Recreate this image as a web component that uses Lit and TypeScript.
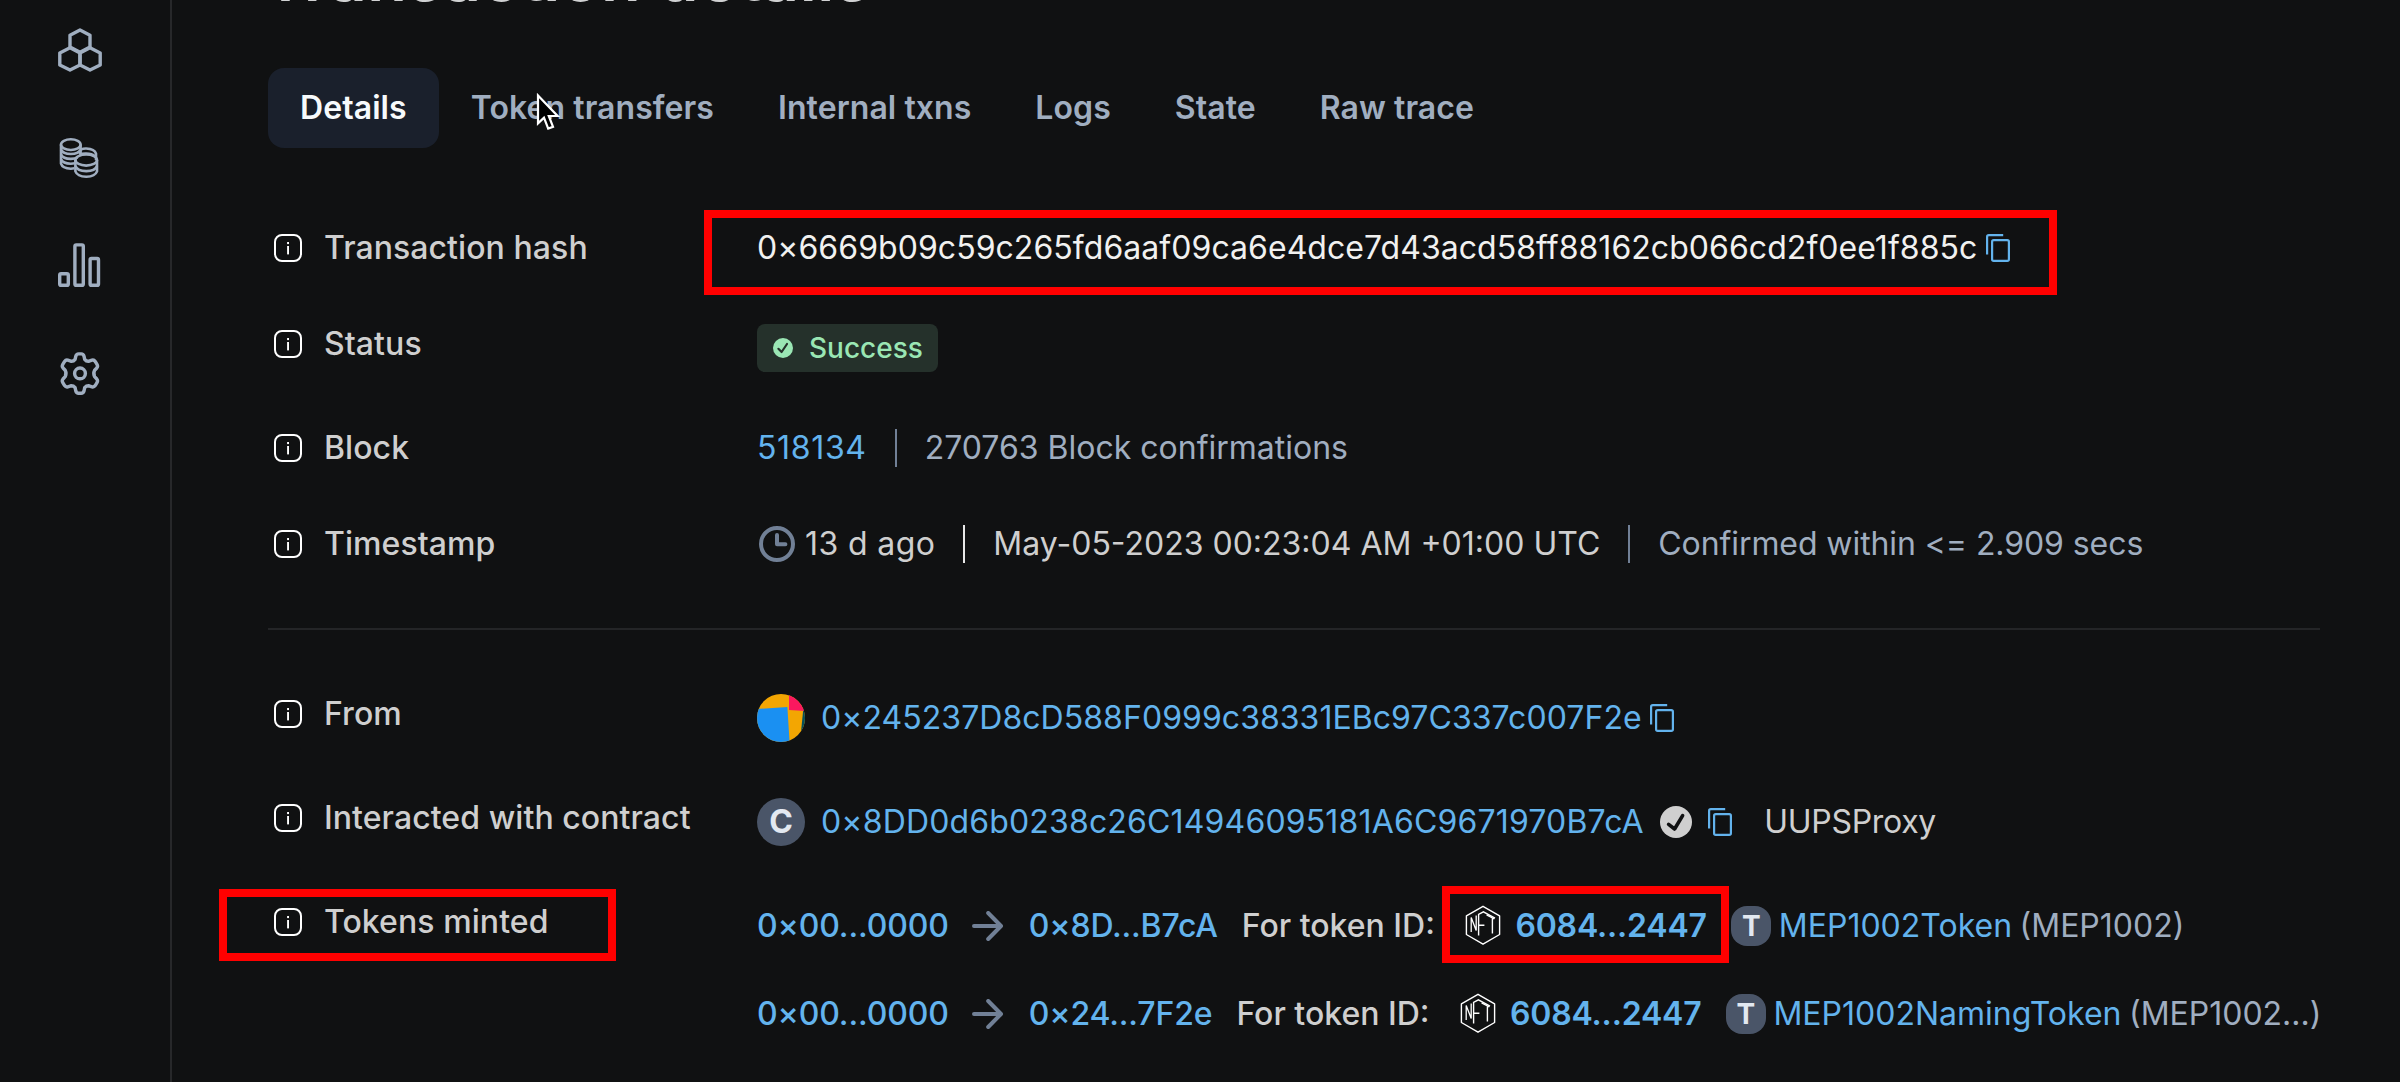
import { LitElement, html, css } from "lit";
import { customElement } from "lit/decorators.js";

const tabs = ["Details", "Token transfers", "Internal txns", "Logs", "State", "Raw trace"];

const infoIcon = html`<svg class="info" viewBox="0 0 28 28" width="28" height="28" fill="none">
  <rect x="1" y="1" width="26" height="26" rx="7" stroke="#fff" stroke-width="2" />
  <rect x="13.1" y="8" width="1.9" height="2.1" fill="#fff" />
  <rect x="13.1" y="12" width="1.9" height="8.4" fill="#fff" />
</svg>`;

const copyIcon = html`<svg class="copy" viewBox="0 0 24 28" width="24" height="28" fill="none">
  <path d="M17.2 1.1H2.8Q1.1 1.1 1.1 2.8V20.4" stroke="#63b3ed" stroke-width="2.2" />
  <rect x="6.1" y="6.1" width="16.8" height="20.8" rx="1.6" stroke="#63b3ed" stroke-width="2.2" />
</svg>`;

const arrowIcon = html`<svg class="arrow" viewBox="0 0 32 30" width="32" height="30" fill="none">
  <path d="M2 15H28M16.2 2L29 15L16.2 28" stroke="#718096" stroke-width="4" stroke-linecap="round" stroke-linejoin="round" />
</svg>`;

const nftIcon = html`<svg class="nft" viewBox="0 0 36 42" width="36" height="42" fill="none" stroke="#fff">
  <path d="M18 1.3L34.6 10.9V29.5L18 39.2L1.4 29.5V10.9Z" stroke-width="1.4" stroke-linejoin="round" />
  <path d="M6.2 27V12.4L11.2 25.4V10.4" stroke-width="1.3" />
  <path d="M13.6 30.6V9.4L18.4 6.8L30 13.2M13.6 20.2H19.4" stroke-width="1.4" />
  <path d="M21.6 9.8L29.4 14M27.4 12.6V28.4" stroke-width="1.4" />
</svg>`;

@customElement("app-root")
export class AppRoot extends LitElement {
  static styles = css`
    :host {
      display: block;
      width: 2400px;
      height: 1082px;
      overflow: hidden;
      position: relative;
      background: #101112;
      font-family: Inter, "Liberation Sans", sans-serif;
      font-size: 32px;
      line-height: 48px;
      color: #cfcfcf;
    }
    svg { display: block; flex: none; }
    .page { display: flex; height: 1082px; }
    .sidebar {
      box-sizing: border-box;
      width: 172px;
      flex: none;
      border-right: 2px solid #27282a;
      display: flex;
      flex-direction: column;
      align-items: center;
      gap: 48px;
      padding: 20px 10px 0 0;
    }
    .nav { width: 60px; height: 60px; }
    .main { padding-left: 96px; width: 2052px; flex: none; }
    .title {
      margin: 0;
      display: flow-root;
      height: 68px;
      font-size: 65px;
      font-weight: 600;
      letter-spacing: 0.5px;
      line-height: 80px;
      color: #d0d1d2;
    }
    .title span { display: block; margin: -62px 0 0 -4px; }
    .tabs { display: flex; height: 80px; font-weight: 600; color: #a0aec0; letter-spacing: 0.07px; }
    .tab { padding: 16px 32px; border-radius: 16px; white-space: nowrap; }
    .tab.active { background: #1a202c; color: #f7fafc; }
    .row { display: flex; align-items: flex-start; white-space: nowrap; }
    .label {
      display: flex;
      align-items: center;
      flex: none;
      width: 489px;
      padding-left: 6px;
      box-sizing: border-box;
      gap: 22px;
      font-weight: 500;
      letter-spacing: 0.07px;
    }
    .value { display: flex; align-items: center; height: 48px; flex: none; }
    .value > span { flex: none; }
    .hash-row { margin-top: 76px; }
    .status-row { margin-top: 48px; }
    .status-row .value { margin-top: 4px; }
    .block-row { margin-top: 52px; }
    .time-row { margin-top: 48px; }
    .divider { height: 2px; background: #242527; margin: 60px 0; width: 2052px; }
    .low > .value, .transfers { margin-top: 4px; }
    .low { margin-bottom: 52px; }
    .bright { color: #f1f1f0; }
    .blue { color: #63b3ed; }
    .gray { color: #a0aec0; }
    .mid { font-weight: 500; }
    .addr { letter-spacing: -0.15px; }
    .hash { letter-spacing: 0.05px; }
    .contract { letter-spacing: 0.16px; }
    .block { letter-spacing: 0.65px; }
    .ago { letter-spacing: 0.4px; }
    .confirmed { letter-spacing: -0.08px; }
    .copy { margin-left: 8.5px; }
    .badge {
      display: flex;
      align-items: center;
      box-sizing: border-box;
      height: 48px;
      width: 181px;
      padding-left: 16px;
      gap: 16px;
      border-radius: 8px;
      background: #25312b;
      color: #9ae6b4;
      font-size: 28px;
      font-weight: 500;
    }
    .sep { width: 2px; height: 38px; background: #718096; margin: 0 28px; }
    .sep.light { background: #e8e8e8; }
    .clock { margin: 0 10px 0 2px; }
    .avatar { margin-right: 16px; }
    .circle {
      width: 48px; height: 48px; border-radius: 50%;
      background: #4a5568; color: #e2e8f0; font-weight: 700;
      text-align: center; margin-right: 16px;
    }
    .token {
      width: 40px; height: 40px; border-radius: 16px; line-height: 40px;
      background: #4a5568; color: #e2e8f0; font-weight: 700; font-size: 28px;
      text-align: center; margin-right: 7.5px;
    }
    .verified { margin: 0 7.5px 0 16.5px; }
    .proxy { margin-left: 32px; letter-spacing: -0.3px; }
    .arrow { margin: 0 25px 0 23px; }
    .for { margin-left: 24px; }
    .nft { margin: 0 14.5px 0 30px; }
    .id { font-weight: 600; letter-spacing: -0.18px; margin-right: 24.5px; }
    .sym { margin-left: 7.5px; }
    .transfers { display: flex; flex-direction: column; gap: 40px; flex: none; }
    .mark { position: absolute; box-sizing: border-box; border: 8px solid #ff0000; }
    .mark-hash { left: 704px; top: 209.5px; width: 1353px; height: 85px; }
    .mark-minted { left: 219px; top: 889px; width: 397px; height: 72px; }
    .mark-id { left: 1442px; top: 886px; width: 287px; height: 77px; }
    .cursor { position: absolute; left: 535px; top: 92px; }
  `;

  private row(cls: string, label: string, value: unknown) {
    return html`<div class="row ${cls}">
      <div class="label">${infoIcon}<span>${label}</span></div>
      ${value}
    </div>`;
  }

  private transfer(to: string, name: string, symbol: string) {
    return html`<div class="value">
      <span class="blue mid addr">0×00...0000</span>${arrowIcon}<span class="blue mid addr">${to}</span>
      <span class="for mid">For token ID:</span>${nftIcon}
      <span class="blue id">6084...2447</span><span class="token">T</span>
      <span class="blue">${name}</span><span class="gray sym">(${symbol})</span>
    </div>`;
  }

  render() {
    return html`
      <div class="page">
        <nav class="sidebar">
          <svg class="nav" viewBox="50 20 60 60" fill="none" stroke="#a0aec0" stroke-width="3.4" stroke-linejoin="round">
            <path d="M80 30L90 35.2V47L80 52.2L70 47V35.2Z" />
            <path d="M70 47.8L80 53V65L70 70L59.8 65V53Z" />
            <path d="M90 47.8L100.2 53V65L90 70L80 65V53Z" />
          </svg>
          <svg class="nav" viewBox="50 128 60 60" fill="none" stroke="#a0aec0" stroke-width="2.6">
            <ellipse cx="70.8" cy="144.6" rx="9.8" ry="5.4" />
            <path d="M61 144.6V163.6Q62.5 168.4 70.8 168.7L74.4 168.3" />
            <path d="M80.6 144.6V154M61 149.6Q63 154 70.8 154T80.6 149.6" />
            <path d="M61 154.6Q63 158.8 70.8 158.9Q75 158.8 77.6 157.4M61 159.4Q63 163.6 70.8 163.7L75 163.2" />
            <path d="M80.6 149.6Q83.4 148.4 86.2 148.5Q94.6 149 96 153.6V160" />
            <path d="M79.2 154.6Q82 153.4 86.2 153.5Q92 153.6 95 156.4" />
            <ellipse cx="86.2" cy="160" rx="10.8" ry="5.6" />
            <path d="M75.4 160V171.4Q77.4 176.6 86.2 176.7T97 171.4V160" />
            <path d="M75.4 166Q77.4 171 86.2 171.1T97 166" />
          </svg>
          <svg class="nav" viewBox="50 236 60 60" fill="none" stroke="#a0aec0" stroke-width="3.4">
            <rect x="59.7" y="273.7" width="8.6" height="11.6" rx="1.4" />
            <rect x="74.9" y="244.9" width="8.4" height="40.4" rx="1.4" />
            <rect x="90.1" y="258.5" width="8.4" height="26.8" rx="1.4" />
          </svg>
          <svg class="nav" viewBox="50 344 60 60" fill="none" stroke="#a0aec0" stroke-width="3.4" stroke-linejoin="round">
            <circle cx="80" cy="373.4" r="5.4" />
            <path d="M75.8 356.2Q76.4 353.9 78.6 353.9H81.2Q83.4 353.9 84 356.2L84.7 359.4Q86.4 361.6 89 361.2L92 360.2Q94 359.7 95.2 361.4L97 364.4Q98.2 366.4 96.8 368L94.6 370.3Q93 373.6 94.6 376.6L96.8 379Q98.2 380.6 97 382.6L95.2 385.6Q94 387.3 92 386.8L89 385.8Q86.4 385.6 84.7 387.6L84 391Q83.4 393.2 81.2 393.2H78.6Q76.4 393.2 75.8 391L75.1 387.6Q73.4 385.6 70.8 385.8L67.8 386.8Q65.8 387.3 64.6 385.6L62.8 382.6Q61.6 380.6 63 379L65.2 376.6Q66.8 373.6 65.2 370.3L63 368Q61.6 366.4 62.8 364.4L64.6 361.4Q65.8 359.7 67.8 360.2L70.8 361.2Q73.4 361.6 75.1 359.4Z" />
          </svg>
        </nav>
        <main class="main">
          <h1 class="title"><span>Transaction details</span></h1>
          <div class="tabs">
            ${tabs.map((t, i) => html`<div class="tab ${i === 0 ? "active" : ""}">${t}</div>`)}
          </div>
          ${this.row("hash-row", "Transaction hash", html`<div class="value">
            <span class="bright hash">0×6669b09c59c265fd6aaf09ca6e4dce7d43acd58ff88162cb066cd2f0ee1f885c</span>${copyIcon}
          </div>`)}
          ${this.row("status-row", "Status", html`<div class="value">
            <div class="badge">
              <svg viewBox="0 0 20 20" width="20" height="20"><circle cx="10" cy="10" r="10" fill="#9ae6b4" />
                <path d="M5.4 10.8L8.6 14L14 6" fill="none" stroke="#25312b" stroke-width="2.2" stroke-linecap="round" stroke-linejoin="round" /></svg>
              <span>Success</span>
            </div>
          </div>`)}
          ${this.row("block-row", "Block", html`<div class="value">
            <span class="blue block">518134</span><span class="sep"></span><span class="gray">270763 Block confirmations</span>
          </div>`)}
          ${this.row("time-row", "Timestamp", html`<div class="value">
            <svg class="clock" viewBox="0 0 36 36" width="36" height="36" fill="none" stroke="#718096">
              <circle cx="18" cy="18" r="16" stroke-width="4" />
              <path d="M18 9V18.2H26.4" stroke-width="4" stroke-linecap="round" stroke-linejoin="round" /></svg>
            <span class="ago">13 d ago</span><span class="sep light"></span><span>May-05-2023 00:23:04 AM +01:00 UTC</span><span class="sep"></span><span class="gray confirmed">Confirmed within &lt;= 2.909 secs</span>
          </div>`)}
          <div class="divider"></div>
          ${this.row("low", "From", html`<div class="value">
            <svg class="avatar" viewBox="0 0 48 48" width="48" height="48">
              <defs><clipPath id="round"><circle cx="24" cy="24" r="24" /></clipPath></defs>
              <g clip-path="url(#round)">
                <rect width="48" height="48" fill="#f3a602" />
                <path d="M46.4 14L43 48H48V14Z" fill="#03505c" />
                <path d="M32 0H48V17L32 16Z" fill="#fb185f" />
                <path d="M0 15L30.4 13L32.6 48H0Z" fill="#1a90f2" />
              </g></svg>
            <span class="blue hash">0×245237D8cD588F0999c38331EBc97C337c007F2e</span>${copyIcon}
          </div>`)}
          ${this.row("low", "Interacted with contract", html`<div class="value">
            <span class="circle">C</span>
            <span class="blue contract">0×8DD0d6b0238c26C14946095181A6C9671970B7cA</span>
            <svg class="verified" viewBox="0 0 32 32" width="32" height="32"><circle cx="16" cy="16" r="16" fill="#cfcfcf" />
              <path d="M8.6 18.4L14.6 23L22.6 9.6" fill="none" stroke="#101112" stroke-width="3.6" stroke-linecap="round" stroke-linejoin="round" /></svg>
            ${copyIcon}<span class="proxy">UUPSProxy</span>
          </div>`)}
          ${this.row("low", "Tokens minted", html`<div class="transfers">
            ${this.transfer("0×8D...B7cA", "MEP1002Token", "MEP1002")}
            ${this.transfer("0×24...7F2e", "MEP1002NamingToken", "MEP1002...")}
          </div>`)}
        </main>
      </div>
      <div class="mark mark-hash"></div>
      <div class="mark mark-minted"></div>
      <div class="mark mark-id"></div>
      <svg class="cursor" viewBox="0 0 28 42" width="28" height="42">
        <path d="M3 3.6V31.4L9 25.6L13.2 36.6L18 34.8L13.8 24H22.6Z" fill="#000" stroke="#fff" stroke-width="2.2" />
      </svg>
    `;
  }
}
